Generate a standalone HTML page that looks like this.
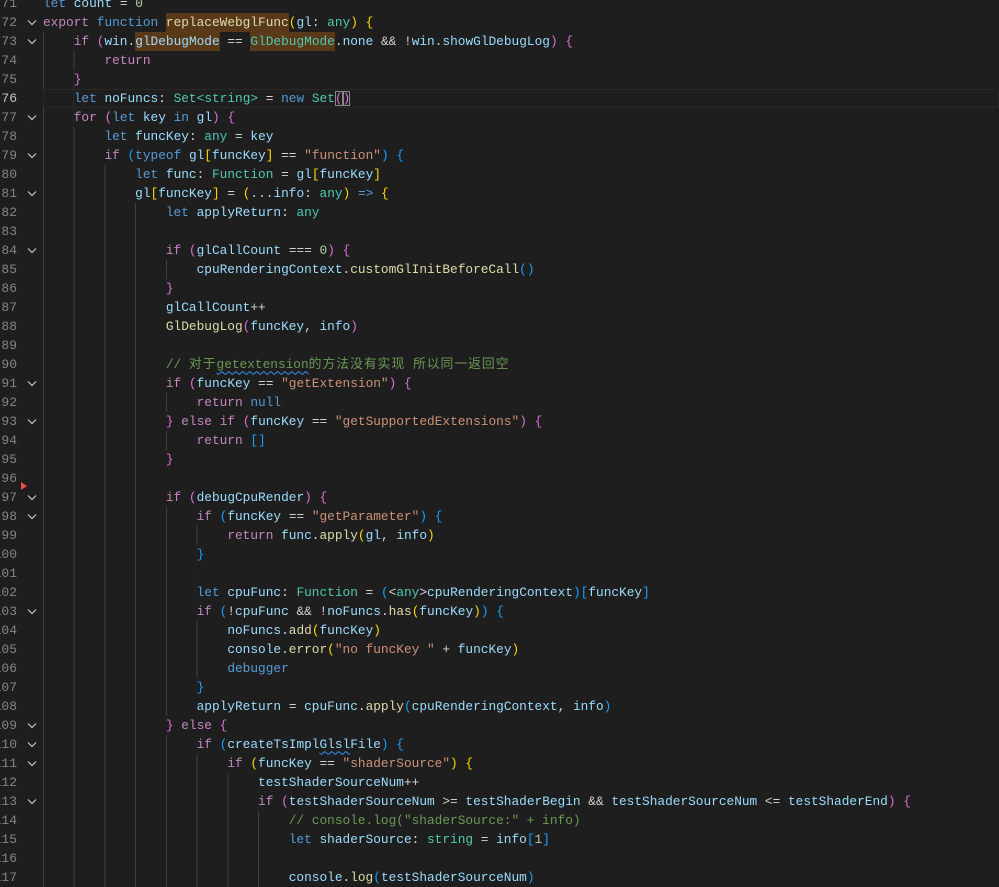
<!DOCTYPE html>
<html><head><meta charset="utf-8"><style>
html,body{margin:0;padding:0;background:#1e1e1e;overflow:hidden;width:999px;height:883px}
#ed{position:absolute;top:-6.5px;left:0;width:999px;font-family:"Liberation Mono","Noto Sans CJK SC",monospace;font-size:12.8px;color:#d4d4d4}
.l{position:relative;height:19px;line-height:19px;padding-left:43px;white-space:pre;background-image:repeating-linear-gradient(90deg,#404040 0 1px,transparent 1px 30.72px);background-repeat:no-repeat;background-position:43px 0;background-size:0 100%}
.n{position:absolute;left:-21px;width:38px;text-align:right;color:#858585;font-size:13px}
.cv{position:absolute;left:27px;top:6px;width:10px;height:7px}
.i1{background-size:30.72px 100%}.i2{background-size:61.44px 100%}.i3{background-size:92.16px 100%}.i4{background-size:122.88px 100%}
.i5{background-size:153.6px 100%}.i6{background-size:184.32px 100%}.i7{background-size:215.04px 100%}.i8{background-size:245.76px 100%}
.k{color:#c586c0}.b{color:#569cd6}.f{color:#dcdcaa}.v{color:#9cdcfe}.t{color:#4ec9b0}.s{color:#ce9178}.nu{color:#b5cea8}.c{color:#6a9955}
.g{color:#ffd700}.o{color:#da70d6}.bl{color:#179fff}
.hl{background:#5a3918;display:inline-block;height:19px;vertical-align:top}
.sq{text-decoration:underline wavy #3794ff;text-decoration-thickness:1px;text-underline-offset:3px}
.cj{letter-spacing:1px}
.cur{position:absolute;left:43px;right:0;top:0;height:17px;border:1px solid #282828}
</style></head><body><div id="ed">
<div class="l"><span class="n">71</span><span class="b">let</span> <span class="v">count</span> = <span class="nu">0</span></div>
<div class="l"><span class="n">72</span><svg class="cv" viewBox="0 0 10 7"><path d="M1 1.5l4 4 4-4" stroke="#c5c5c5" stroke-width="1.2" fill="none"/></svg><span class="k">export</span> <span class="b">function</span> <span class="f hl">replaceWebglFunc</span><span class="g">(</span><span class="v">gl</span>: <span class="t">any</span><span class="g">)</span> <span class="g">{</span></div>
<div class="l i1"><span class="n">73</span><svg class="cv" viewBox="0 0 10 7"><path d="M1 1.5l4 4 4-4" stroke="#c5c5c5" stroke-width="1.2" fill="none"/></svg>    <span class="k">if</span> <span class="o">(</span><span class="v">win</span>.<span class="v hl">glDebugMode</span> == <span class="t hl">GlDebugMode</span>.<span class="v">none</span> &amp;&amp; !<span class="v">win</span>.<span class="v">showGlDebugLog</span><span class="o">)</span> <span class="o">{</span></div>
<div class="l i2"><span class="n">74</span>        <span class="k">return</span></div>
<div class="l i1"><span class="n">75</span>    <span class="o">}</span></div>
<div class="l i1"><span class="cur"></span><span class="n" style="color:#c6c6c6">76</span>    <span class="b">let</span> <span class="v">noFuncs</span>: <span class="t">Set</span><span class="t">&lt;</span><span class="t">string</span><span class="t">&gt;</span> = <span class="b">new</span> <span class="t">Set</span><span class="o" style="outline:1px solid #888;outline-offset:-1px">(</span><span class="o" style="outline:1px solid #888;outline-offset:-1px">)</span></div>
<div class="l i1"><span class="n">77</span><svg class="cv" viewBox="0 0 10 7"><path d="M1 1.5l4 4 4-4" stroke="#c5c5c5" stroke-width="1.2" fill="none"/></svg>    <span class="k">for</span> <span class="o">(</span><span class="b">let</span> <span class="v">key</span> <span class="b">in</span> <span class="v">gl</span><span class="o">)</span> <span class="o">{</span></div>
<div class="l i2"><span class="n">78</span>        <span class="b">let</span> <span class="v">funcKey</span>: <span class="t">any</span> = <span class="v">key</span></div>
<div class="l i2"><span class="n">79</span><svg class="cv" viewBox="0 0 10 7"><path d="M1 1.5l4 4 4-4" stroke="#c5c5c5" stroke-width="1.2" fill="none"/></svg>        <span class="k">if</span> <span class="bl">(</span><span class="b">typeof</span> <span class="v">gl</span><span class="g">[</span><span class="v">funcKey</span><span class="g">]</span> == <span class="s">"function"</span><span class="bl">)</span> <span class="bl">{</span></div>
<div class="l i3"><span class="n">80</span>            <span class="b">let</span> <span class="v">func</span>: <span class="t">Function</span> = <span class="v">gl</span><span class="g">[</span><span class="v">funcKey</span><span class="g">]</span></div>
<div class="l i3"><span class="n">81</span><svg class="cv" viewBox="0 0 10 7"><path d="M1 1.5l4 4 4-4" stroke="#c5c5c5" stroke-width="1.2" fill="none"/></svg>            <span class="v">gl</span><span class="g">[</span><span class="v">funcKey</span><span class="g">]</span> = <span class="g">(</span>...<span class="v">info</span>: <span class="t">any</span><span class="g">)</span> <span class="b">=&gt;</span> <span class="g">{</span></div>
<div class="l i4"><span class="n">82</span>                <span class="b">let</span> <span class="v">applyReturn</span>: <span class="t">any</span></div>
<div class="l i4"><span class="n">83</span></div>
<div class="l i4"><span class="n">84</span><svg class="cv" viewBox="0 0 10 7"><path d="M1 1.5l4 4 4-4" stroke="#c5c5c5" stroke-width="1.2" fill="none"/></svg>                <span class="k">if</span> <span class="o">(</span><span class="v">glCallCount</span> === <span class="nu">0</span><span class="o">)</span> <span class="o">{</span></div>
<div class="l i5"><span class="n">85</span>                    <span class="v">cpuRenderingContext</span>.<span class="f">customGlInitBeforeCall</span><span class="bl">()</span></div>
<div class="l i4"><span class="n">86</span>                <span class="o">}</span></div>
<div class="l i4"><span class="n">87</span>                <span class="v">glCallCount</span>++</div>
<div class="l i4"><span class="n">88</span>                <span class="f">GlDebugLog</span><span class="o">(</span><span class="v">funcKey</span>, <span class="v">info</span><span class="o">)</span></div>
<div class="l i4"><span class="n">89</span></div>
<div class="l i4"><span class="n">90</span>                <span class="c">// <span class="cj">对于</span><span class="sq">getextension</span><span class="cj">的方法没有实现</span> <span class="cj">所以同一返回空</span></span></div>
<div class="l i4"><span class="n">91</span><svg class="cv" viewBox="0 0 10 7"><path d="M1 1.5l4 4 4-4" stroke="#c5c5c5" stroke-width="1.2" fill="none"/></svg>                <span class="k">if</span> <span class="o">(</span><span class="v">funcKey</span> == <span class="s">"getExtension"</span><span class="o">)</span> <span class="o">{</span></div>
<div class="l i5"><span class="n">92</span>                    <span class="k">return</span> <span class="b">null</span></div>
<div class="l i4"><span class="n">93</span><svg class="cv" viewBox="0 0 10 7"><path d="M1 1.5l4 4 4-4" stroke="#c5c5c5" stroke-width="1.2" fill="none"/></svg>                <span class="o">}</span> <span class="k">else</span> <span class="k">if</span> <span class="o">(</span><span class="v">funcKey</span> == <span class="s">"getSupportedExtensions"</span><span class="o">)</span> <span class="o">{</span></div>
<div class="l i5"><span class="n">94</span>                    <span class="k">return</span> <span class="bl">[]</span></div>
<div class="l i4"><span class="n">95</span>                <span class="o">}</span></div>
<div class="l i4"><span class="n">96</span><svg style="position:absolute;left:21px;top:13px" width="6" height="8"><path d="M0 0l6 4-6 4z" fill="#f14c4c"/></svg></div>
<div class="l i4"><span class="n">97</span><svg class="cv" viewBox="0 0 10 7"><path d="M1 1.5l4 4 4-4" stroke="#c5c5c5" stroke-width="1.2" fill="none"/></svg>                <span class="k">if</span> <span class="o">(</span><span class="v">debugCpuRender</span><span class="o">)</span> <span class="o">{</span></div>
<div class="l i5"><span class="n">98</span><svg class="cv" viewBox="0 0 10 7"><path d="M1 1.5l4 4 4-4" stroke="#c5c5c5" stroke-width="1.2" fill="none"/></svg>                    <span class="k">if</span> <span class="bl">(</span><span class="v">funcKey</span> == <span class="s">"getParameter"</span><span class="bl">)</span> <span class="bl">{</span></div>
<div class="l i6"><span class="n">99</span>                        <span class="k">return</span> <span class="v">func</span>.<span class="f">apply</span><span class="g">(</span><span class="v">gl</span>, <span class="v">info</span><span class="g">)</span></div>
<div class="l i5"><span class="n">100</span>                    <span class="bl">}</span></div>
<div class="l i5"><span class="n">101</span></div>
<div class="l i5"><span class="n">102</span>                    <span class="b">let</span> <span class="v">cpuFunc</span>: <span class="t">Function</span> = <span class="bl">(</span>&lt;<span class="t">any</span>&gt;<span class="v">cpuRenderingContext</span><span class="bl">)</span><span class="bl">[</span><span class="v">funcKey</span><span class="bl">]</span></div>
<div class="l i5"><span class="n">103</span><svg class="cv" viewBox="0 0 10 7"><path d="M1 1.5l4 4 4-4" stroke="#c5c5c5" stroke-width="1.2" fill="none"/></svg>                    <span class="k">if</span> <span class="bl">(</span>!<span class="v">cpuFunc</span> &amp;&amp; !<span class="v">noFuncs</span>.<span class="f">has</span><span class="g">(</span><span class="v">funcKey</span><span class="g">)</span><span class="bl">)</span> <span class="bl">{</span></div>
<div class="l i6"><span class="n">104</span>                        <span class="v">noFuncs</span>.<span class="f">add</span><span class="g">(</span><span class="v">funcKey</span><span class="g">)</span></div>
<div class="l i6"><span class="n">105</span>                        <span class="v">console</span>.<span class="f">error</span><span class="g">(</span><span class="s">"no funcKey "</span> + <span class="v">funcKey</span><span class="g">)</span></div>
<div class="l i6"><span class="n">106</span>                        <span class="b">debugger</span></div>
<div class="l i5"><span class="n">107</span>                    <span class="bl">}</span></div>
<div class="l i5"><span class="n">108</span>                    <span class="v">applyReturn</span> = <span class="v">cpuFunc</span>.<span class="f">apply</span><span class="bl">(</span><span class="v">cpuRenderingContext</span>, <span class="v">info</span><span class="bl">)</span></div>
<div class="l i4"><span class="n">109</span><svg class="cv" viewBox="0 0 10 7"><path d="M1 1.5l4 4 4-4" stroke="#c5c5c5" stroke-width="1.2" fill="none"/></svg>                <span class="o">}</span> <span class="k">else</span> <span class="o">{</span></div>
<div class="l i5"><span class="n">110</span><svg class="cv" viewBox="0 0 10 7"><path d="M1 1.5l4 4 4-4" stroke="#c5c5c5" stroke-width="1.2" fill="none"/></svg>                    <span class="k">if</span> <span class="bl">(</span><span class="v">createTsImpl<span class="sq">Glsl</span>File</span><span class="bl">)</span> <span class="bl">{</span></div>
<div class="l i6"><span class="n">111</span><svg class="cv" viewBox="0 0 10 7"><path d="M1 1.5l4 4 4-4" stroke="#c5c5c5" stroke-width="1.2" fill="none"/></svg>                        <span class="k">if</span> <span class="g">(</span><span class="v">funcKey</span> == <span class="s">"shaderSource"</span><span class="g">)</span> <span class="g">{</span></div>
<div class="l i7"><span class="n">112</span>                            <span class="v">testShaderSourceNum</span>++</div>
<div class="l i7"><span class="n">113</span><svg class="cv" viewBox="0 0 10 7"><path d="M1 1.5l4 4 4-4" stroke="#c5c5c5" stroke-width="1.2" fill="none"/></svg>                            <span class="k">if</span> <span class="o">(</span><span class="v">testShaderSourceNum</span> &gt;= <span class="v">testShaderBegin</span> &amp;&amp; <span class="v">testShaderSourceNum</span> &lt;= <span class="v">testShaderEnd</span><span class="o">)</span> <span class="o">{</span></div>
<div class="l i8"><span class="n">114</span>                                <span class="c">// console.log("shaderSource:" + info)</span></div>
<div class="l i8"><span class="n">115</span>                                <span class="b">let</span> <span class="v">shaderSource</span>: <span class="t">string</span> = <span class="v">info</span><span class="bl">[</span><span class="nu">1</span><span class="bl">]</span></div>
<div class="l i8"><span class="n">116</span></div>
<div class="l i8"><span class="n">117</span>                                <span class="v">console</span>.<span class="f">log</span><span class="bl">(</span><span class="v">testShaderSourceNum</span><span class="bl">)</span></div>
</div></body></html>
